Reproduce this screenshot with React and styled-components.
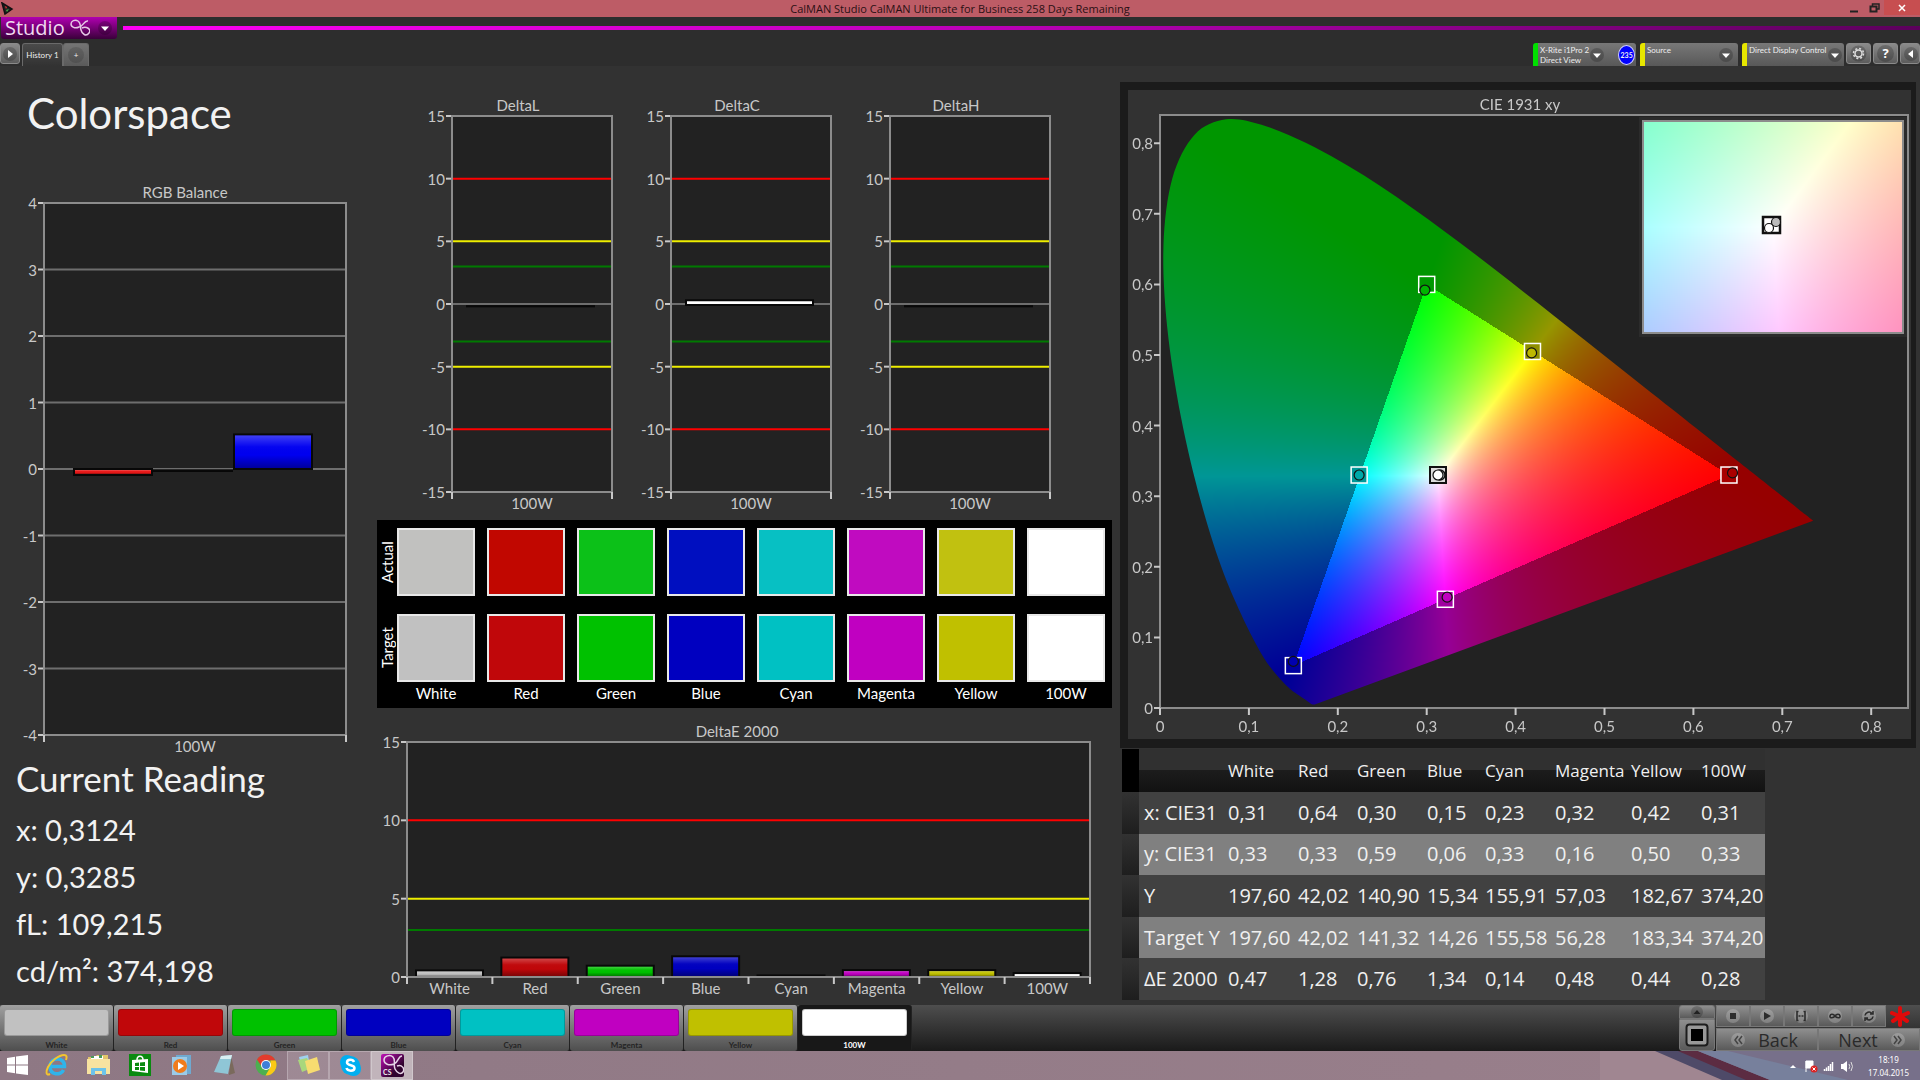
import React, { useLayoutEffect, useRef } from "react";
import styled, { createGlobalStyle } from "styled-components";

const PATCHES = [
  { name: "White", actual: "#c1c1bf", target: "#c1c1c1", delta: 0.42 },
  { name: "Red", actual: "#c10700", target: "#c0070a", delta: 1.24 },
  { name: "Green", actual: "#0cc118", target: "#00c100", delta: 0.72 },
  { name: "Blue", actual: "#000fc0", target: "#0000c0", delta: 1.32 },
  { name: "Cyan", actual: "#07c0c3", target: "#00c1c3", delta: 0.1 },
  { name: "Magenta", actual: "#c00bc0", target: "#c000c1", delta: 0.44 },
  { name: "Yellow", actual: "#c1c110", target: "#c0c000", delta: 0.44 },
  { name: "100W", actual: "#ffffff", target: "#ffffff", delta: 0.25 },
];

const ROWS = [
  ["x: CIE31", "0,31", "0,64", "0,30", "0,15", "0,23", "0,32", "0,42", "0,31"],
  ["y: CIE31", "0,33", "0,33", "0,59", "0,06", "0,33", "0,16", "0,50", "0,33"],
  ["Y", "197,60", "42,02", "140,90", "15,34", "155,91", "57,03", "182,67", "374,20"],
  ["Target Y", "197,60", "42,02", "141,32", "14,26", "155,58", "56,28", "183,34", "374,20"],
  ["ΔE 2000", "0,47", "1,28", "0,76", "1,34", "0,14", "0,48", "0,44", "0,28"],
];

const COLUMN_WIDTHS = [17, 84, 70, 59, 70, 58, 70, 76, 70, 69];

const READINGS = ["x: 0,3124", "y: 0,3285", "fL: 109,215", "cd/m²: 374,198"];

const DELTA_LIMITS = [
  { value: 10, color: "#f00" },
  { value: 5, color: "#ee0" },
  { value: 3, color: "#007a00" },
  { value: -3, color: "#007a00" },
  { value: -5, color: "#ee0" },
  { value: -10, color: "#f00" },
];

const DELTA_CHARTS = [
  { title: "DeltaL", from: -0.19, to: -0.17, color: "#111" },
  { title: "DeltaC", from: -0.08, to: 0.3, color: "#fff" },
  { title: "DeltaH", from: -0.19, to: -0.17, color: "#111" },
];

// spectral locus, CIE 1931 2 degree observer
const LOCUS = [
  [0.1741, 0.005], [0.1714, 0.0051], [0.1689, 0.0069], [0.1644, 0.0109],
  [0.1566, 0.0177], [0.144, 0.0297], [0.1241, 0.0578], [0.1096, 0.0868],
  [0.0913, 0.1327], [0.0687, 0.2007], [0.0454, 0.295], [0.0235, 0.4127],
  [0.0082, 0.5384], [0.0039, 0.6548], [0.0139, 0.7502], [0.0389, 0.812],
  [0.0743, 0.8338], [0.1142, 0.8262], [0.1547, 0.8059], [0.1929, 0.7816],
  [0.2296, 0.7543], [0.2658, 0.7243], [0.3016, 0.6923], [0.3373, 0.6589],
  [0.3731, 0.6245], [0.4087, 0.5896], [0.4441, 0.5547], [0.4788, 0.5202],
  [0.5125, 0.4866], [0.5448, 0.4544], [0.5752, 0.4242], [0.6029, 0.3965],
  [0.627, 0.3725], [0.6482, 0.3514], [0.6658, 0.334], [0.6915, 0.3083],
  [0.7079, 0.292], [0.719, 0.2809], [0.726, 0.274], [0.7347, 0.2653],
];

const CIE = { width: 783, height: 649, left: 32, right: 780, top: 25, bottom: 618 };
const INSET = { x: 515, y: 31, width: 260, height: 212, range: 0.025 };
const toX = (x) => CIE.left + x * 889;
const toY = (y) => CIE.bottom - y * 706;

const MARKERS = [
  { x: 0.3, y: 0.6, cx: 0.298, cy: 0.592, back: "#009900", fill: "#00b400" },
  { x: 0.419, y: 0.505, cx: 0.418, cy: 0.503, back: "#8f8f00", fill: "#bdb800" },
  { x: 0.64, y: 0.33, cx: 0.644, cy: 0.333, back: "#a80000", fill: "#aa0000" },
  { x: 0.321, y: 0.154, cx: 0.323, cy: 0.157, back: "#a000a0", fill: "#c000c0" },
  { x: 0.15, y: 0.06, cx: 0.15, cy: 0.066, back: "#0000a0", fill: "#0000b0" },
  { x: 0.224, y: 0.33, cx: 0.224, cy: 0.33, back: "#009999", fill: "#00a8a8" },
];

// xy -> rgb with the brightest channel at full, dimmed outside of Rec.709
const xyColor = (x, y) => {
  const X = x / y;
  const Z = (1 - x - y) / y;
  const r = 3.2406 * X - 1.5372 - 0.4986 * Z;
  const g = -0.9689 * X + 1.8758 + 0.0415 * Z;
  const b = 0.0557 * X - 0.204 + 1.057 * Z;
  const max = Math.max(r, g, b);
  const gain = (Math.min(r, g, b) < 0 ? 150 : 255) / max;
  return [r, g, b].map((c) => Math.max(0, c) * gain);
};

const paintColors = (width, height, xyAt) => {
  const canvas = document.createElement("canvas");
  canvas.width = width;
  canvas.height = height;
  const ctx = canvas.getContext("2d");
  const image = ctx.createImageData(width, height);
  for (let j = 0; j < height; j++) {
    for (let i = 0; i < width; i++) {
      const [x, y] = xyAt(i + 0.5, j + 0.5);
      const color = xyColor(x, Math.max(y, 0.001));
      image.data.set([...color, 255], (j * width + i) * 4);
    }
  }
  ctx.putImageData(image, 0, 0);
  return canvas;
};

function CieChart() {
  const canvasRef = useRef(null);

  useLayoutEffect(() => {
    const ctx = canvasRef.current.getContext("2d");
    const plotWidth = CIE.right - CIE.left;
    const plotHeight = CIE.bottom - CIE.top;
    ctx.fillStyle = "#222";
    ctx.fillRect(CIE.left, CIE.top, plotWidth, plotHeight);

    const points = LOCUS.map(([x, y]) => [toX(x), toY(y)]);
    ctx.save();
    ctx.beginPath();
    ctx.moveTo(...points[0]);
    for (let i = 0; i < points.length - 1; i++) {
      const p0 = points[Math.max(i - 1, 0)];
      const p1 = points[i];
      const p2 = points[i + 1];
      const p3 = points[Math.min(i + 2, points.length - 1)];
      ctx.bezierCurveTo(
        p1[0] + (p2[0] - p0[0]) / 6,
        p1[1] + (p2[1] - p0[1]) / 6,
        p2[0] - (p3[0] - p1[0]) / 6,
        p2[1] - (p3[1] - p1[1]) / 6,
        p2[0],
        p2[1]
      );
    }
    ctx.closePath();
    ctx.clip();
    ctx.drawImage(
      paintColors(plotWidth, plotHeight, (i, j) => [i / 889, (plotHeight - j) / 706]),
      CIE.left,
      CIE.top
    );
    ctx.restore();

    ctx.fillStyle = "#2b2b2b";
    ctx.fillRect(INSET.x - 4, INSET.y - 4, INSET.width + 8, INSET.height + 8);
    ctx.drawImage(
      paintColors(INSET.width, INSET.height, (i, j) => [
        0.3127 + (i / INSET.width - 0.5) * 2 * INSET.range,
        0.329 - (j / INSET.height - 0.5) * 2 * INSET.range,
      ]),
      INSET.x,
      INSET.y
    );
  }, []);

  const ticks = [0, 1, 2, 3, 4, 5, 6, 7, 8];

  return (
    <CiePanel>
      <canvas ref={canvasRef} width={CIE.width} height={CIE.height} />
      <ChartSvg viewBox={`0 0 ${CIE.width} ${CIE.height}`}>
        <text x="392" y="20" textAnchor="middle">
          CIE 1931 xy
        </text>
        <rect
          x={CIE.left}
          y={CIE.top}
          width={CIE.right - CIE.left}
          height={CIE.bottom - CIE.top}
          className="frame"
        />
        {ticks.map((t) => (
          <g key={t}>
            <path
              className="tick"
              d={`M${toX(t / 10)} 618v7M32 ${toY(t / 10)}h-6`}
            />
            <text x={toX(t / 10)} y="642" textAnchor="middle">
              {t ? `0,${t}` : "0"}
            </text>
            <text x="25" y={toY(t / 10) + 6} textAnchor="end">
              {t ? `0,${t}` : "0"}
            </text>
          </g>
        ))}
        {MARKERS.map((m) => (
          <g key={m.fill}>
            <rect
              x={toX(m.x) - 8}
              y={toY(m.y) - 8}
              width="16"
              height="16"
              fill={m.back}
              stroke="#fff"
              strokeWidth="1.5"
            />
            <circle
              cx={toX(m.cx)}
              cy={toY(m.cy)}
              r="5"
              fill={m.fill}
              stroke="#111"
              strokeWidth="1.2"
            />
          </g>
        ))}
        <g stroke="#111">
          <rect x="302" y="377" width="16" height="16" fill="#ddd" strokeWidth="2" />
          <circle cx="312" cy="385" r="5" fill="#bbb" strokeWidth="1.5" />
          <circle cx="310" cy="385" r="5" fill="#fff" strokeWidth="1.2" />
        </g>
        <rect
          x={INSET.x}
          y={INSET.y}
          width={INSET.width}
          height={INSET.height}
          className="frame"
        />
        <g stroke="#111">
          <rect x="635" y="127" width="17" height="16" fill="#fff" strokeWidth="2.5" />
          <circle cx="648" cy="132" r="4.5" fill="#bbb" strokeWidth="1.2" />
          <circle cx="641" cy="138" r="4.5" fill="#fff" strokeWidth="1.2" />
        </g>
      </ChartSvg>
    </CiePanel>
  );
}

function BarChart({
  width,
  height,
  plot,
  max,
  min,
  step,
  title,
  titleX,
  grid,
  limits = [],
  bars,
  labels,
}) {
  const { left, right, top, bottom } = plot;
  const yOf = (v) => bottom - ((v - min) / (max - min)) * (bottom - top);
  const slot = (right - left) / labels.length;
  const ticks = [];
  for (let v = max; v >= min; v -= step) ticks.push(v);

  return (
    <ChartSvg viewBox={`0 0 ${width} ${height}`}>
      <text x={titleX} y={top - 5} textAnchor="middle">
        {title}
      </text>
      <rect
        x={left}
        y={top}
        width={right - left}
        height={bottom - top}
        fill="#222"
      />
      {ticks.map((v) => (
        <g key={v}>
          <path className="tick" d={`M${left} ${yOf(v)}h-6`} />
          {(grid || v === 0) && (
            <path className="grid" d={`M${left} ${yOf(v)}H${right}`} />
          )}
          <text x={left - 7} y={yOf(v) + 6} textAnchor="end">
            {v}
          </text>
        </g>
      ))}
      {limits.map((l) => (
        <path
          key={l.value}
          d={`M${left} ${yOf(l.value)}H${right}`}
          stroke={l.color}
          strokeWidth="2"
        />
      ))}
      {bars.map((b, i) => {
        const y = yOf(Math.max(b.from, b.to));
        const h = Math.abs(yOf(b.from) - yOf(b.to));
        return (
          <g key={i}>
            <rect
              x={b.x}
              y={y}
              width={b.width}
              height={h}
              fill={b.color}
              stroke="#080808"
              strokeWidth="2"
            />
            {h > 5 && (
              <rect
                x={b.x + 1}
                y={y + 1}
                width={b.width - 2}
                height={h - 2}
                fill="url(#gloss)"
              />
            )}
          </g>
        );
      })}
      <rect
        className="frame"
        x={left}
        y={top}
        width={right - left}
        height={bottom - top}
      />
      {labels.map((label, i) => (
        <g key={label}>
          <path className="tick" d={`M${left + slot * i} ${bottom}v7`} />
          <text
            x={left + slot * (i + 0.5)}
            y={bottom + 17}
            textAnchor="middle"
          >
            {label}
          </text>
        </g>
      ))}
      <path className="tick" d={`M${right} ${bottom}v7`} />
    </ChartSvg>
  );
}

const Caret = () => (
  <svg width="16" height="16" viewBox="0 0 16 16">
    <circle cx="8" cy="8" r="7" fill="#0003" />
    <path d="M4 6.5h8L8 11z" fill="#fff" />
  </svg>
);

function TopBars() {
  return (
    <React.Fragment>
      <TitleBar>
        <svg width="13" height="13" viewBox="0 0 13 13">
          <path d="M1 1L11 7L4 12z" fill="#222" stroke="#111" strokeWidth="1.5" />
          <path d="M4 4l2 1-1 2z" fill="#e33" />
          <path d="M5 8l3-1-2 3z" fill="#4a4" />
        </svg>
        <span>CalMAN Studio CalMAN Ultimate for Business 258 Days Remaining</span>
        <div className="controls">
          <button aria-label="Minimize">
            <svg width="10" height="10">
              <path d="M1 8.5h8" stroke="#222" strokeWidth="2" />
            </svg>
          </button>
          <button aria-label="Restore">
            <svg width="11" height="10" fill="none" stroke="#222">
              <path d="M3.5 3V1H10v5H8" strokeWidth="1.5" />
              <rect x="1.5" y="3.5" width="6" height="5" strokeWidth="2" />
            </svg>
          </button>
          <button aria-label="Close" className="close">
            <svg width="8" height="8" stroke="#fff" strokeWidth="1.5">
              <path d="M1 1l6 6M7 1l-6 6" />
            </svg>
          </button>
        </div>
      </TitleBar>
      <BrandBar>
        <Brand>
          Studio
          <svg width="20" height="18" viewBox="0 0 20 18" fill="none" stroke="#e6c8e6">
            <path
              d="M18 2C14 1 13 8 9 8 5 10 1 8 1 5S5 0 8 2s2 5 3 9 5 7 8 3-3-7-7-5"
              strokeWidth="1.5"
            />
          </svg>
          <Caret />
        </Brand>
        <i />
      </BrandBar>
      <TabBar>
        <SquareButton $width={20} aria-label="Expand">
          <svg width="16" height="16" viewBox="0 0 16 16">
            <circle cx="8" cy="8" r="7" fill="#0003" />
            <path d="M6 4l5 4-5 4z" fill="#fff" />
          </svg>
        </SquareButton>
        <Tab $active>History 1</Tab>
        <Tab>
          <span>+</span>
        </Tab>
        <div className="space" />
        <Device $color="#00e000">
          <p>
            X-Rite i1Pro 2<br />
            Direct View
          </p>
          <Caret />
          <b>235</b>
        </Device>
        <Device $color="#e6e600" $width={98}>
          <p>Source</p>
          <Caret />
        </Device>
        <Device $color="#e6e600" $width={102}>
          <p>Direct Display Control</p>
          <Caret />
        </Device>
        <SquareButton $width={25} aria-label="Settings">
          <svg width="17" height="17" viewBox="0 0 17 17" fill="none" stroke="#ddd">
            <circle cx="8.5" cy="8.5" r="8" fill="#0003" stroke="none" />
            <circle cx="8.5" cy="8.5" r="3.5" strokeWidth="1.5" />
            <circle
              cx="8.5"
              cy="8.5"
              r="5"
              strokeWidth="1.5"
              strokeDasharray="2 1.927"
            />
          </svg>
        </SquareButton>
        <SquareButton $width={25} aria-label="Help">
          <em>?</em>
        </SquareButton>
        <SquareButton $width={20} aria-label="Collapse">
          <svg width="16" height="16" viewBox="0 0 16 16">
            <circle cx="9" cy="8" r="7" fill="#0003" />
            <path d="M11 4L6 8l5 4z" fill="#fff" />
          </svg>
        </SquareButton>
      </TabBar>
    </React.Fragment>
  );
}

function BottomBar() {
  return (
    <PatternBar>
      {PATCHES.map((p) => (
        <Pattern key={p.name} $color={p.target} $active={p.name === "100W"}>
          <i />
          {p.name}
        </Pattern>
      ))}
      <Transport>
        <div className="stack">
          <button aria-label="More">
            <svg width="12" height="12">
              <circle cx="6" cy="6" r="6" fill="#0003" />
              <path d="M2.5 8L6 4l3.5 4z" fill="#222" />
            </svg>
          </button>
          <button aria-label="Pattern window">
            <svg width="24" height="24">
              <rect
                x="1.5"
                y="1.5"
                width="21"
                height="21"
                rx="3"
                fill="#999"
                stroke="#1c1c1c"
                strokeWidth="2"
              />
              <rect x="6" y="6" width="12" height="12" fill="#000" />
            </svg>
          </button>
        </div>
        <div className="keys">
          <div>
            {[
              ["Stop", "M5 5h6v6H5z"],
              ["Play", "M5 4l7 4-7 4z"],
            ].map(([label, d]) => (
              <button key={label} aria-label={label}>
                <svg width="16" height="16">
                  <circle cx="8" cy="8" r="7" fill="#fff3" />
                  <path d={d} fill="#2c2c2c" />
                </svg>
              </button>
            ))}
            {[
              [
                "Series",
                "M5.5 3.5H4v9h1.5M10.5 3.5H12v9h-1.5M5.5 8h2M8.5 8h2",
              ],
              [
                "Continuous",
                "M8 8c-1.5-2-4.5-2.5-5 0s3.5 2 5 0 4.5-2.5 5 0-3.5 2-5 0z",
              ],
              ["Refresh", "M4 7.5a4 4 0 0 1 7-2M12 3v3H9M12 8.5a4 4 0 0 1-7 2M4 13v-3h3"],
            ].map(([label, d]) => (
              <button key={label} aria-label={label}>
                <svg width="16" height="16" fill="none" stroke="#2c2c2c">
                  <circle cx="8" cy="8" r="7" fill="#fff3" stroke="none" />
                  <path d={d} strokeWidth="1.6" />
                </svg>
              </button>
            ))}
            <svg width="34" height="23" viewBox="3 0 34 23">
              <path
                d="M17 11V3M17 12v8M16 11L9 8M18 11l7-3M16 12l-6 4M18 12l6 4"
                stroke="#e00a0a"
                strokeWidth="4"
                strokeLinecap="round"
              />
            </svg>
          </div>
          <div>
            <button className="wide back">
              <svg width="16" height="16" fill="none" stroke="#444">
                <circle cx="8" cy="8" r="7" fill="#fff3" stroke="none" />
                <path d="M8 4L5 8l3 4M12 4L9 8l3 4" strokeWidth="1.5" />
              </svg>
              Back
            </button>
            <button className="wide next">
              Next
              <svg width="16" height="16" fill="none" stroke="#444">
                <circle cx="8" cy="8" r="7" fill="#fff3" stroke="none" />
                <path d="M4 4l3 4-3 4M8 4l3 4-3 4" strokeWidth="1.5" />
              </svg>
            </button>
          </div>
        </div>
      </Transport>
    </PatternBar>
  );
}

const APPS = [
  {
    name: "Start",
    icon: (
      <path
        d="M1 4l8-1.2V10.5H1zM10 2.6L22 1v9.5H10zM1 11.5h8v7.7L1 18zM10 11.5h12V21l-12-1.600z"
        fill="#fff"
      />
    ),
  },
  {
    name: "Internet Explorer",
    icon: (
      <g fill="none">
        <path
          d="M5 12.5h14.5C20 2.500 5 2.500 5 12.500c0 9 11 9 13.500 3.500"
          stroke="#2fb4ea"
          strokeWidth="3.5"
        />
        <path
          d="M5 20c-4 2-4.500-2-2-7C6 7 14 1 19 1c3 0 3 2 2 5"
          stroke="#f4c52e"
          strokeWidth="2"
        />
      </g>
    ),
  },
  {
    name: "Explorer",
    icon: (
      <g>
        <path d="M1 3h7l2-2h11v19H1z" fill="#e3c56a" />
        <path d="M4 2h12v3H4z" fill="#fff" />
        <path d="M4 2h3v2H4zM12 1h3v3h-3z" fill="#4a9a5a" />
        <path d="M0 5h23v15H0z" fill="#f7e3a0" />
        <path d="M4 21v-7h15v7h-4v-4H8v4z" fill="#6cc3ea" />
      </g>
    ),
  },
  {
    name: "Store",
    icon: (
      <g>
        <path d="M0 0h22v22H0z" fill="#0a8a10" />
        <path d="M3 6l16-1v14L3 17z" fill="#fff" />
        <path d="M8 6c0-5 6-5 6 0" fill="none" stroke="#fff" strokeWidth="1.5" />
        <path d="M6 9l4-.5V12H6zM11 8.5L16 8v4h-5zM6 13h4v3H6zM11 13h5v4l-5-.5z" fill="#0a8a10" />
      </g>
    ),
  },
  {
    name: "Media Player",
    icon: (
      <g>
        <path d="M5 1h15v19H5z" fill="#6fa9d0" />
        <path d="M1 3h15v18H1z" fill="#9bcbe8" />
        <circle cx="9" cy="12" r="7" fill="#f07c1c" />
        <path d="M7 8l6 4-6 4z" fill="#fff" />
      </g>
    ),
  },
  {
    name: "Notepad",
    icon: (
      <g>
        <path d="M18 2l4 17-6 2z" fill="#7a6a5c" />
        <path d="M8 2l11-1-4 19-14-2z" fill="#8fc6d6" />
        <path d="M8 2l11-1-1 4L7 5z" fill="#d8eef2" />
      </g>
    ),
  },
  {
    name: "Chrome",
    icon: (
      <g>
        <circle cx="11" cy="11" r="10.5" fill="#4caf50" />
        <path d="M2 5.5A10.5 10.5 0 0 1 20.5 6.5H11L7 13z" fill="#e33b2e" />
        <path d="M20.5 6.5A10.5 10.5 0 0 1 10.5 21.5L15.5 13V6.500z" fill="#fbc916" />
        <circle cx="11" cy="11" r="5" fill="#fff" />
        <circle cx="11" cy="11" r="4" fill="#3f7fd8" />
      </g>
    ),
  },
  {
    name: "Sticky Notes",
    open: true,
    icon: (
      <g>
        <path d="M2 3l9-2 2 12-8 3z" fill="#9fd0ee" />
        <path d="M1 6l9-2 5 10-10 4z" fill="#a9d77c" />
        <path d="M8 7l12-4 3 13-12 4z" fill="#f7dc70" />
      </g>
    ),
  },
  {
    name: "Skype",
    open: true,
    icon: (
      <g>
        <rect x="1" y="1" width="14" height="14" rx="7" fill="#00aff0" />
        <rect x="7" y="7" width="15" height="15" rx="7" fill="#00aff0" />
        <circle cx="11.5" cy="11.5" r="9.5" fill="#00aff0" />
        <path
          d="M15 8c-1-3-7-3-7 .5 0 3.5 7.5 2 7.5 5.5 0 3.5-7 3.5-8 0"
          fill="none"
          stroke="#fff"
          strokeWidth="2.5"
        />
      </g>
    ),
  },
  {
    name: "CalMAN Studio",
    active: true,
    icon: (
      <g>
        <rect width="23" height="23" rx="2" fill="url(#calman)" />
        <path
          d="M21 2c-4 0-4 7-8 8C8 12 3 10 3 6s6-6 9-3 0 8 2 12 6 6 8 3-1-8-6-6"
          fill="none"
          stroke="#e6d4e6"
          strokeWidth="1.5"
        />
        <text x="2" y="21" fontSize="7" fontWeight="700" fill="#eee">
          CS
        </text>
      </g>
    ),
  },
];

function Taskbar() {
  return (
    <Desktop>
      <svg className="wallpaper" viewBox="0 0 320 29" preserveAspectRatio="none">
        <path d="M0 0h60l90 29H0z" fill="#a08691" />
        <path d="M60 0h260v29H160z" fill="#77708a" />
        <path d="M55 0h25l72 29h-30z" fill="#4e4a68" />
        <path d="M78 0h20l72 29h-24z" fill="#5c2c42" />
        <path d="M98 0h30l120 29h-78z" fill="#77809c" />
      </svg>
      {APPS.map((app) => (
        <TaskButton key={app.name} aria-label={app.name} $open={app.open} $active={app.active}>
          <svg width="23" height="23" viewBox="0 0 23 23">
            {app.icon}
          </svg>
        </TaskButton>
      ))}
      <Tray>
        <svg width="66" height="14" viewBox="0 0 66 14">
          <path d="M2 9l3-3 3 3z" fill="#fff" />
          <path d="M18 13V2M18 2h7v7h-7z" fill="#fff" stroke="#fff" />
          <circle cx="26" cy="10" r="3.5" fill="#d22" />
          <path d="M24.5 8.5l3 3M27.5 8.5l-3 3" stroke="#fff" />
          <path
            d="M36.5 12v-2M38.5 12V8.5M40.5 12V7M42.5 12V5M44.5 12V3"
            stroke="#fff"
            strokeWidth="1.5"
          />
          <path d="M53 5h2l4-3v11l-4-3h-2z" fill="#fff" />
          <path d="M61 5q1.5 2.5 0 5M63 3q3 4.5 0 9" fill="none" stroke="#ddd" />
        </svg>
        <time>
          18:19
          <br />
          17.04.2015
        </time>
      </Tray>
    </Desktop>
  );
}

function App() {
  return (
    <Page>
      <GlobalStyle />
      <svg width="0" height="0" className="defs">
        <linearGradient id="gloss" x1="0" y1="0" x2="0" y2="1">
          <stop offset="0" stopColor="#fff" stopOpacity="0.25" />
          <stop offset="0.35" stopColor="#fff" stopOpacity="0.02" />
          <stop offset="0.6" stopColor="#000" stopOpacity="0" />
          <stop offset="1" stopColor="#000" stopOpacity="0.35" />
        </linearGradient>
        <linearGradient id="calman" x1="0" y1="0" x2="1" y2="1">
          <stop offset="0" stopColor="#c010b8" />
          <stop offset="0.7" stopColor="#30042e" />
        </linearGradient>
      </svg>
      <TopBars />
      <Content>
        <section>
          <Heading>Colorspace</Heading>
          <BarChart
            width={376}
            height={580}
            plot={{ left: 44, right: 346, top: 23, bottom: 555 }}
            max={4}
            min={-4}
            step={1}
            title="RGB Balance"
            titleX={185}
            grid
            bars={[
              { x: 74, width: 78, from: 0, to: -0.09, color: "#e81818" },
              { x: 154, width: 78, from: -0.02, to: -0.03, color: "#080808" },
              { x: 234, width: 78, from: 0, to: 0.52, color: "#0000f0" },
            ]}
            labels={["100W"]}
          />
          <Reading>
            <h2>Current Reading</h2>
            {READINGS.map((r) => (
              <p key={r}>{r}</p>
            ))}
          </Reading>
        </section>
        <section>
          <DeltaRow>
            {DELTA_CHARTS.map((c) => (
              <BarChart
                key={c.title}
                width={219}
                height={427}
                plot={{ left: 39, right: 199, top: 26, bottom: 402 }}
                max={15}
                min={-15}
                step={5}
                title={c.title}
                titleX={105}
                limits={DELTA_LIMITS}
                bars={[{ ...c, x: 54, width: 127 }]}
                labels={["100W"]}
              />
            ))}
          </DeltaRow>
          <SwatchPanel>
            {["actual", "target"].map((kind) => (
              <React.Fragment key={kind}>
                <span className="side">{kind === "actual" ? "Actual" : "Target"}</span>
                {PATCHES.map((p) => (
                  <Swatch key={p.name} $color={p[kind]} />
                ))}
              </React.Fragment>
            ))}
            <span />
            {PATCHES.map((p) => (
              <span key={p.name}>{p.name}</span>
            ))}
          </SwatchPanel>
          <BarChart
            width={744}
            height={289}
            plot={{ left: 31, right: 714, top: 26, bottom: 261 }}
            max={15}
            min={0}
            step={5}
            title="DeltaE 2000"
            titleX={361}
            limits={DELTA_LIMITS.slice(0, 3)}
            bars={PATCHES.map((p, i) => ({
              x: 40 + (i * (714 - 31)) / PATCHES.length,
              width: 67,
              from: 0,
              to: p.delta,
              color: p.target,
            }))}
            labels={PATCHES.map((p) => p.name)}
          />
        </section>
        <section>
          <CieChart />
          <DataTable>
            <colgroup>
              {COLUMN_WIDTHS.map((w, i) => (
                <col key={i} width={w} />
              ))}
            </colgroup>
            <thead>
              <tr>
                <td />
                <th />
                {PATCHES.map((p) => (
                  <th key={p.name} scope="col">
                    {p.name}
                  </th>
                ))}
              </tr>
            </thead>
            <tbody>
              {ROWS.map(([label, ...cells]) => (
                <tr key={label}>
                  <td />
                  <th scope="row">{label}</th>
                  {cells.map((c, i) => (
                    <td key={i}>{c}</td>
                  ))}
                </tr>
              ))}
            </tbody>
          </DataTable>
        </section>
      </Content>
      <BottomBar />
      <Taskbar />
    </Page>
  );
}

export default App;

const GlobalStyle = createGlobalStyle`
  * {
    box-sizing: border-box;
    margin: 0;
  }

  body {
    background: #323232;
    font-family: Lato, "Noto Sans", sans-serif;
  }

  button {
    padding: 0;
    border: none;
    background: none;
    font-family: inherit;
  }

  svg {
    display: block;
    flex: none;
  }
`;

const Page = styled.div`
  min-height: 100vh;
  display: flex;
  flex-direction: column;
  overflow: hidden;

  .defs {
    position: absolute;
  }
`;

const TitleBar = styled.header`
  height: 17px;
  display: grid;
  grid-template-columns: 1fr auto 1fr;
  align-items: center;
  background: #bd5c66;
  color: #2a1014;
  font: 11px "Open Sans", sans-serif;
  line-height: 17px;

  > svg {
    margin-left: 1px;
  }

  .controls {
    display: flex;
    justify-content: flex-end;
    height: 15px;
    align-self: start;
  }

  .controls button {
    width: 20px;
    display: flex;
    align-items: center;
    justify-content: center;
  }

  .controls .close {
    width: 36px;
    background: #c74e50;
  }
`;

const BrandBar = styled.div`
  height: 26px;
  display: flex;
  gap: 6px;
  padding-left: 1px;
  background: #2d2d2d;

  i {
    flex: 1;
    height: 4px;
    margin-top: 9px;
    background: linear-gradient(to right, #ff00f6, #b800b4 50%, #5c005c);
  }
`;

const Brand = styled.button`
  width: 116px;
  height: 22px;
  display: flex;
  align-items: center;
  gap: 5px;
  padding-left: 4px;
  border-radius: 0 0 3px 3px;
  background: linear-gradient(#b000b0, #3a003a);
  color: #f0dcf0;
  font: 20px "Open Sans", sans-serif;
  line-height: 20px;

  svg:last-child {
    margin-left: 2px;
  }
`;

const TabBar = styled.nav`
  height: 23px;
  display: flex;
  align-items: flex-start;
  background: #2d2d2d;

  .space {
    flex: 1;
  }
`;

const SquareButton = styled.button`
  width: ${({ $width }) => $width}px;
  height: 21px;
  margin-right: 2px;
  display: flex;
  align-items: center;
  justify-content: center;
  border-radius: 3px;
  border: 1px solid #8a8a8a;
  background: linear-gradient(#8a8a8a, #5c5c5c);

  &:last-child {
    margin-right: 0;
  }

  em {
    width: 17px;
    border-radius: 50%;
    background: #0003;
    color: #fff;
    font: 700 13px "Open Sans", sans-serif;
    line-height: 17px;
  }
`;

const Tab = styled.button`
  width: ${({ $active }) => ($active ? 41 : 26)}px;
  height: 23px;
  border: 1px solid #6a6a6a;
  border-bottom: none;
  border-radius: 3px 3px 0 0;
  background: ${({ $active }) =>
    $active ? "linear-gradient(#4a4a4a, #323232)" : "linear-gradient(#747474, #5a5a5a)"};
  color: #eee;
  font-size: 8px;
  white-space: nowrap;

  span {
    display: block;
    width: 16px;
    margin: 0 auto;
    border-radius: 50%;
    background: #0002;
    line-height: 16px;
  }
`;

const Device = styled.button`
  width: ${({ $width }) => ($width ? `${$width}px` : "103px")};
  height: 23px;
  margin-right: ${({ $width }) => ($width === 102 ? 2 : 4)}px;
  display: flex;
  align-items: center;
  border-left: 5px solid ${({ $color }) => $color};
  border-radius: 3px 3px 0 0;
  background: linear-gradient(#787878, #585858);
  color: #eee;
  text-align: left;

  p {
    flex: 1;
    align-self: flex-start;
    padding: 2px 0 0 2px;
    font-size: 8px;
    line-height: 10px;
    white-space: nowrap;
  }

  > svg {
    margin-right: 4px;
  }

  b {
    width: 20px;
    height: 20px;
    margin: 0 1px 0 9px;
    border: 1px solid #ccf;
    border-radius: 50%;
    background: #00f;
    font-size: 7px;
    line-height: 18px;
    text-align: center;
  }
`;

const Content = styled.main`
  flex: 1;
  display: grid;
  grid-template-columns: 47fr 93fr 100fr;
  background: #323232;

  > section {
    min-width: 0;
  }
`;

const Heading = styled.h1`
  padding: 15px 0 35px 27px;
  color: #f2f2f2;
  font-size: 42px;
  font-weight: 400;
  line-height: 64px;
`;

const Reading = styled.div`
  padding-left: 16px;
  color: #f2f2f2;

  h2 {
    margin-bottom: 10px;
    font-size: 35px;
    font-weight: 400;
    line-height: 36px;
  }

  p {
    font-size: 29px;
    line-height: 47px;
  }
`;

const ChartSvg = styled.svg`
  width: 100%;
  height: auto;
  fill: none;

  text {
    fill: #c8c8c8;
    font-size: 15px;
  }

  .frame {
    stroke: #8c8c8c;
    stroke-width: 2;
  }

  .grid {
    stroke: #6e6e6e;
    stroke-width: 2;
  }

  .tick {
    stroke: #c8c8c8;
    stroke-width: 2;
  }
`;

const DeltaRow = styled.div`
  display: grid;
  grid-template-columns: repeat(3, 1fr);
  padding: 24px 50px 0 37px;
`;

const SwatchPanel = styled.div`
  display: grid;
  grid-template-columns: 8px repeat(8, 1fr);
  gap: 17px 12px;
  margin: 3px 8px 8px 1px;
  padding: 8px 7px 0 0;
  height: 188px;
  grid-template-rows: 69px 69px 1fr;
  align-items: start;
  background: #000;
  color: #fff;
  font-size: 15px;
  line-height: 20px;
  text-align: center;

  span:not(.side) {
    margin-top: -17px;
  }

  .side {
    height: 68px;
    width: 16px;
    margin-left: 2px;
    line-height: 16px;
    writing-mode: vertical-rl;
    transform: rotate(180deg);
  }
`;

const Swatch = styled.div`
  height: 68px;
  border: 2px solid #e8e8e8;
  background: ${({ $color }) => $color};
`;

const CiePanel = styled.div`
  display: grid;
  margin: 16px 4px 1px 0;
  border: 8px solid #1b1b1b;
  border-right-width: 5px;
  border-bottom-width: 9px;

  > * {
    grid-area: 1 / 1;
    width: 100%;
  }
`;

const DataTable = styled.table`
  margin-left: 2px;
  width: 643px;
  height: 251px;
  table-layout: fixed;
  border-collapse: collapse;
  background: #414141;
  color: #f0f0f0;
  font-family: "Open Sans", sans-serif;
  font-size: 20px;
  line-height: 30px;
  white-space: nowrap;

  th,
  td {
    padding: 0 0 0 5px;
    font-weight: 400;
    text-align: left;
  }

  thead tr {
    height: 43px;
    font-size: 17px;
    background: linear-gradient(#303030 50%, #1c1c1c 50%, #121212);
  }

  thead td:first-child {
    background: #000;
  }

  tbody td:first-child {
    background: linear-gradient(#323232, #1e1e1e);
  }

  tbody tr:nth-child(even) {
    background: #808080;
  }
`;

const PatternBar = styled.div`
  height: 46px;
  display: flex;
  background: linear-gradient(#4e4e4e, #1a1a1a);
`;

const Pattern = styled.button`
  width: 114px;
  padding: 4px 4px 0;
  border-right: 1px solid #222;
  border-radius: 3px;
  background: ${({ $active }) =>
    $active ? "#181818" : "linear-gradient(#a0a0a0, #4e4e4e)"};
  color: ${({ $active }) => ($active ? "#fff" : "#242424")};
  font-size: 8px;
  font-weight: 700;
  line-height: 12px;

  i {
    display: block;
    height: 27px;
    margin-bottom: 3px;
    border: 1px solid #0003;
    border-radius: 3px;
    background: ${({ $color }) => $color};
  }
`;

const Transport = styled.div`
  display: flex;
  gap: 1px;
  margin-left: auto;

  button {
    display: flex;
    align-items: center;
    justify-content: center;
    border: 1px solid #777;
    background: linear-gradient(#8e8e8e, #5a5a5a);
  }

  .stack button {
    width: 36px;
    height: 14px;
    border-radius: 3px 3px 0 0;
  }

  .stack button + button {
    height: 32px;
    border-radius: 0 0 3px 3px;
  }

  .keys > div {
    display: flex;
    height: 23px;
  }

  .keys button {
    width: 34px;
    height: 22px;
  }

  .keys .wide {
    width: 102px;
    height: 23px;
    gap: 12px;
    color: #2a2a2a;
    font: 18px "Open Sans", sans-serif;
    line-height: 20px;
  }

  .keys .back {
    padding-right: 6px;
  }

  .keys .next {
    padding-left: 6px;
  }
`;

const Desktop = styled.footer`
  position: relative;
  height: 29px;
  display: flex;
  align-items: center;
  background: linear-gradient(to right, #8e7884, #9a808c);

  .wallpaper {
    position: absolute;
    right: 0;
    width: 320px;
    height: 29px;
  }
`;

const TaskButton = styled.button`
  width: 42px;
  height: 29px;
  display: flex;
  align-items: center;
  justify-content: center;
  border: 1px solid
    ${({ $open, $active }) => ($open || $active ? "#ffffff40" : "transparent")};
  background: ${({ $open, $active }) =>
    $active ? "#ffffff70" : $open ? "#ffffff20" : "none"};

  &:nth-of-type(1) {
    width: 35px;
  }
`;

const Tray = styled.div`
  position: relative;
  display: flex;
  align-items: center;
  gap: 14px;
  margin-left: auto;
  padding-right: 11px;
  color: #fff;
  font: 8px "Noto Sans", sans-serif;
  line-height: 13px;
  text-align: center;
`;
